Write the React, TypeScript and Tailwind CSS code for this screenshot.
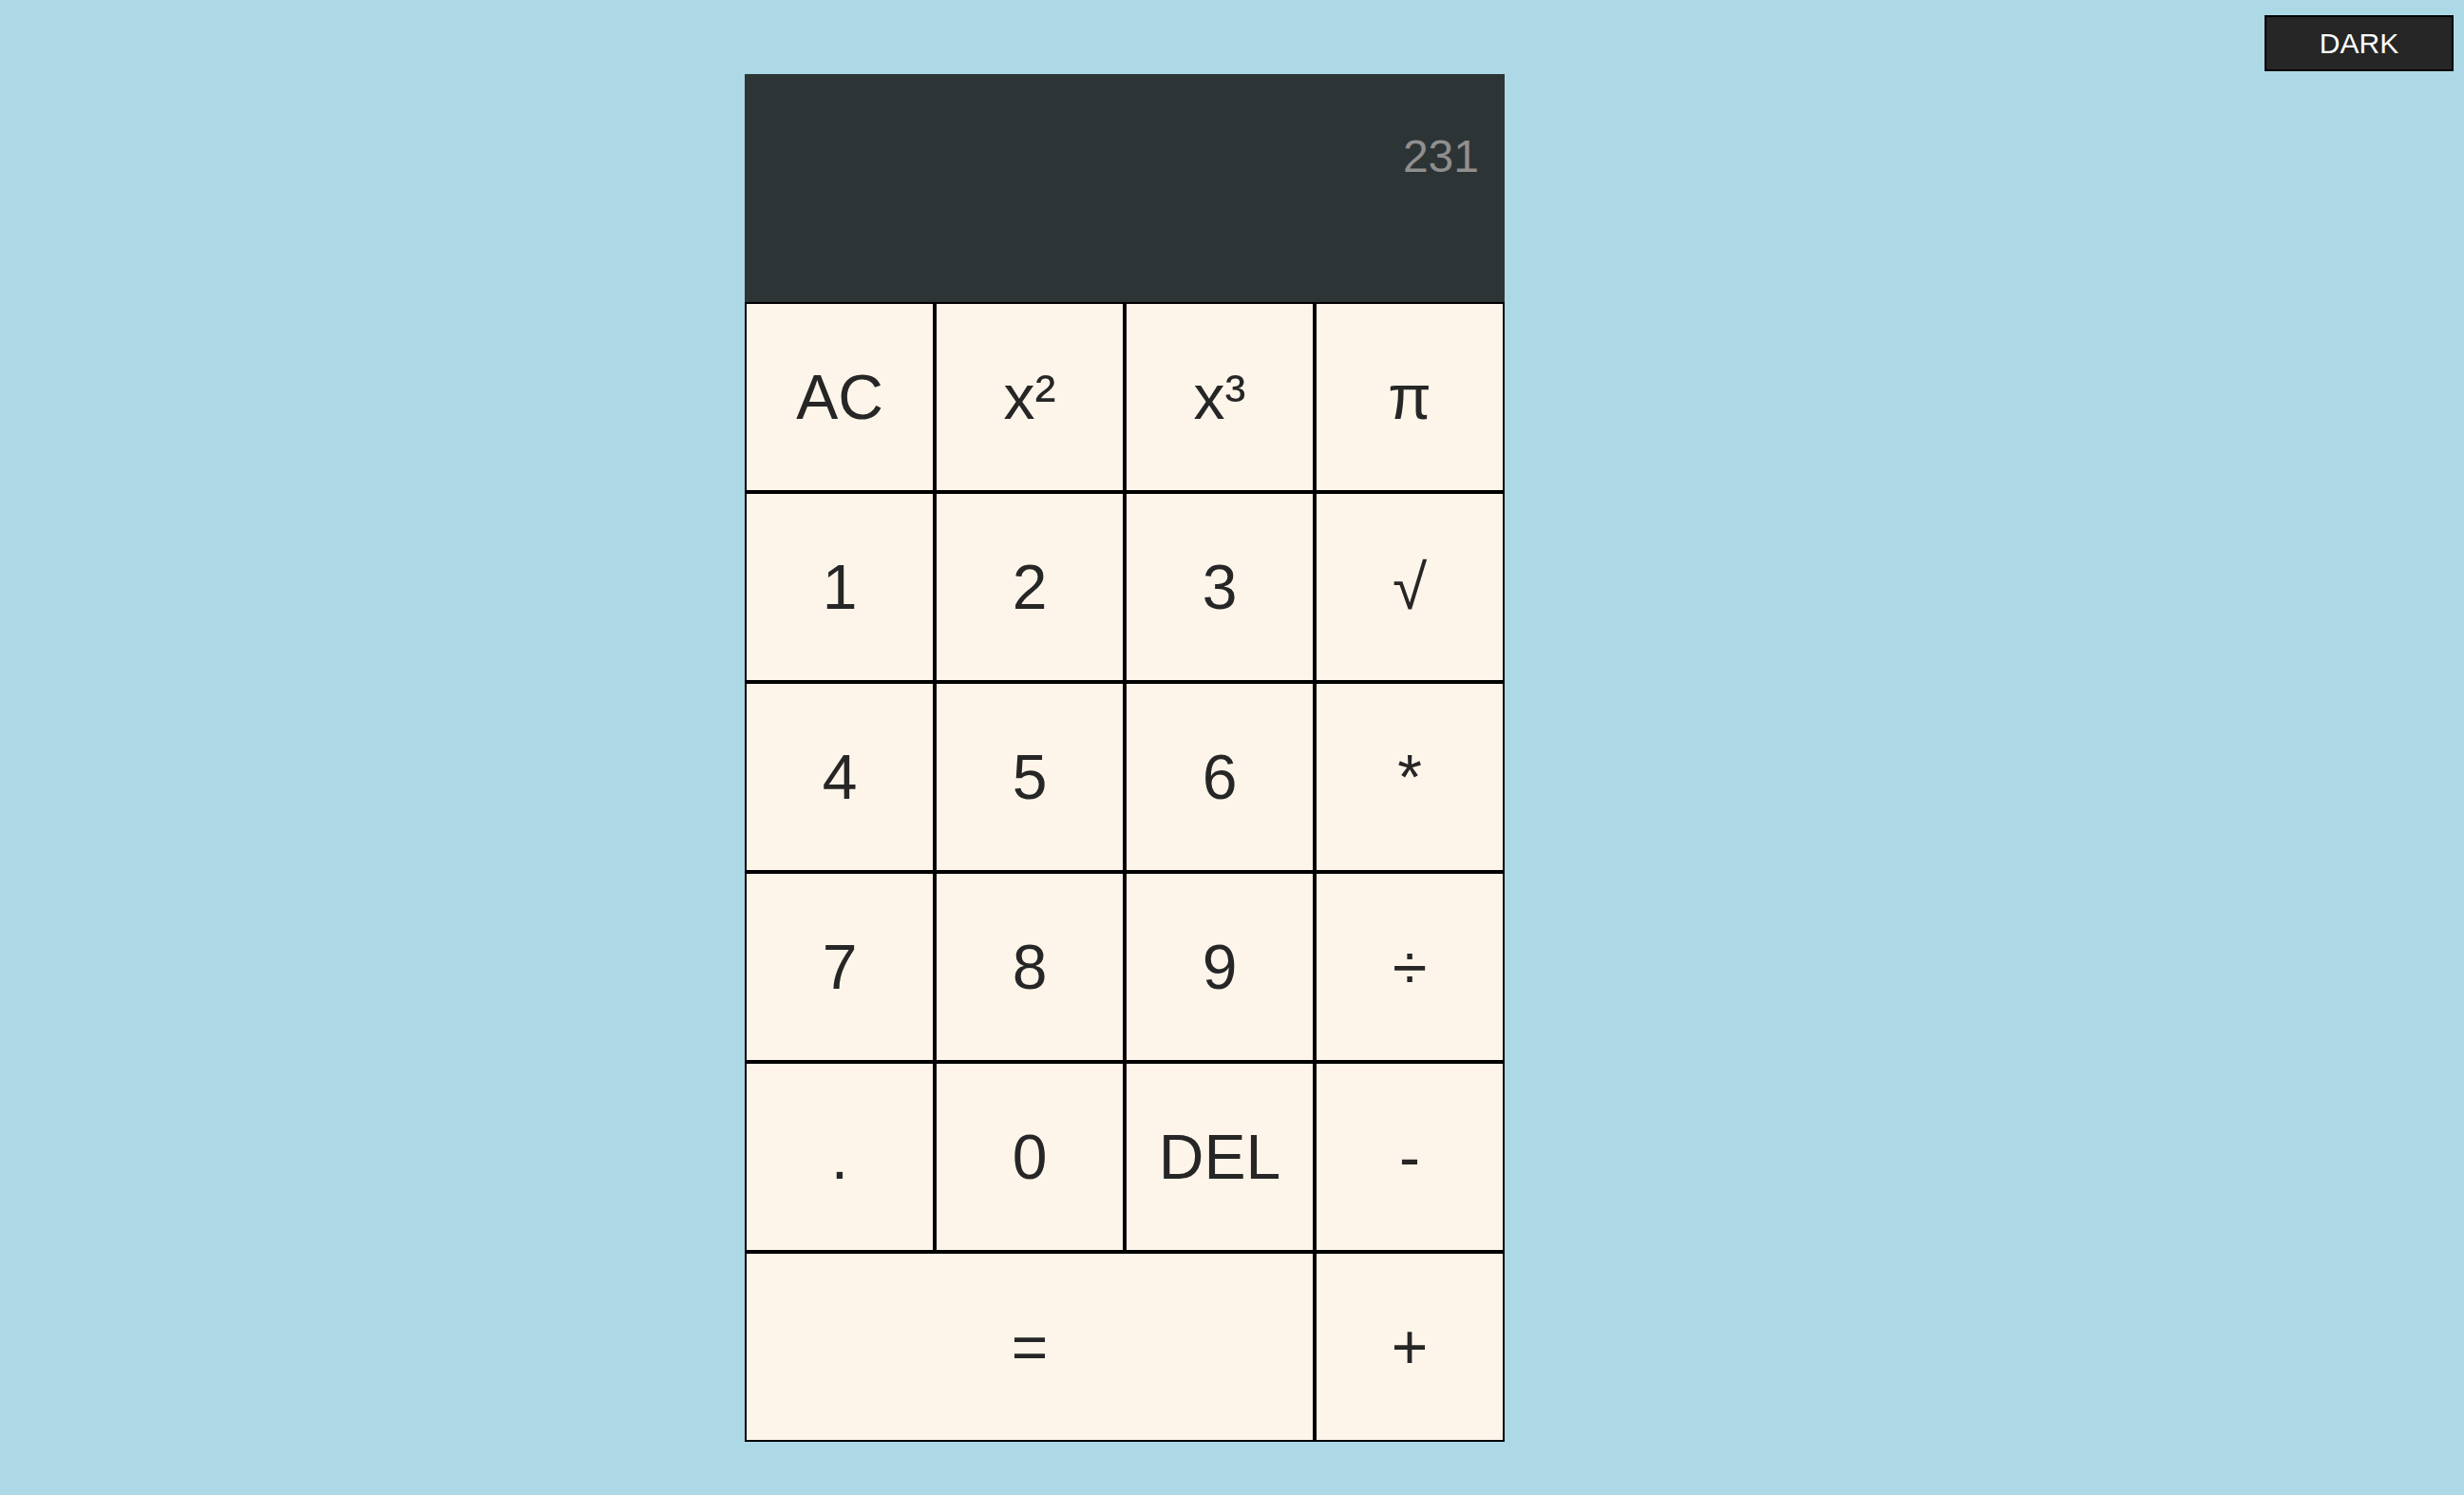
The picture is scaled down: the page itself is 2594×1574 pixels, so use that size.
const keys: { label: string; wide?: boolean }[] = [
  { label: "AC" },
  { label: "x²" },
  { label: "x³" },
  { label: "π" },
  { label: "1" },
  { label: "2" },
  { label: "3" },
  { label: "√" },
  { label: "4" },
  { label: "5" },
  { label: "6" },
  { label: "*" },
  { label: "7" },
  { label: "8" },
  { label: "9" },
  { label: "÷" },
  { label: "." },
  { label: "0" },
  { label: "DEL" },
  { label: "-" },
  { label: "=", wide: true },
  { label: "+" },
];

export default function App() {
  return (
    <div
      className="flex h-[1574px] items-start overflow-hidden bg-[#add8e6]"
      style={{ fontFamily: '"Liberation Sans", Arial, sans-serif' }}
    >
      <div className="ml-[784px] mt-[78px] w-[800px]">
        {/* Display */}
        <div className="h-[240px] bg-[#2d3436] pr-[27px] pt-[51px] text-right text-[48px] text-[#8f8f8f]">
          231
        </div>

        {/* Keypad */}
        <div className="grid grid-cols-4">
          {keys.map((k) => (
            <button
              key={k.label}
              className={`flex h-[200px] items-center justify-center border-2 border-black bg-[#fdf5e9] text-[66px] text-[#262626] ${
                k.wide ? "col-span-3" : ""
              }`}
            >
              {k.label}
            </button>
          ))}
        </div>
      </div>

      <button className="ml-auto mr-[11px] mt-[16px] flex h-[59px] w-[199px] items-center justify-center border-2 border-black bg-[#262626] text-[30px] text-white">
        DARK
      </button>
    </div>
  );
}
